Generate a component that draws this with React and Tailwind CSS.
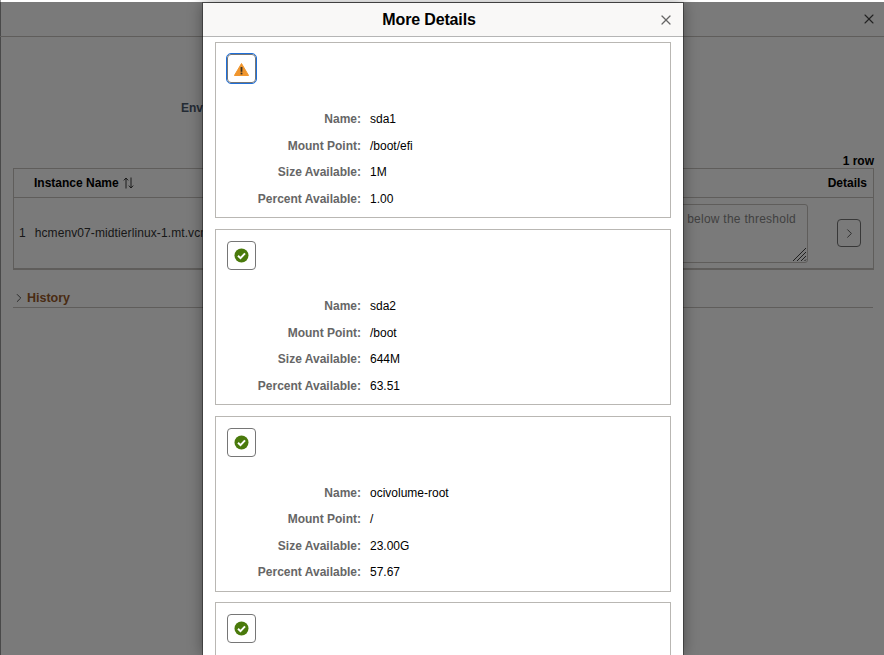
import React from 'react';
import { X, ChevronRight } from 'lucide-react';

const volumes = [
  { id: 1, name: 'sda1', mount: '/boot/efi', size: '1M', percent: '1.00', warn: true },
  { id: 2, name: 'sda2', mount: '/boot', size: '644M', percent: '63.51' },
  { id: 3, name: 'ocivolume-root', mount: '/', size: '23.00G', percent: '57.67' },
  // only the icon of the last card is above the fold
  { id: 4 },
];

function WarnIcon() {
  return (
    <svg width="15" height="13" viewBox="0 0 15 13" className="mt-[2px]">
      <path d="M7.5 0.5 L14.6 12.5 L0.4 12.5 Z" fill="#f0962e" stroke="#f0962e" strokeLinejoin="round" />
      <rect x="6.6" y="4" width="1.8" height="4.8" fill="#3a3226" />
      <rect x="6.6" y="9.6" width="1.8" height="1.8" fill="#3a3226" />
    </svg>
  );
}

function OkIcon() {
  return (
    <svg width="15" height="15" viewBox="0 0 15 15">
      <circle cx="7.5" cy="7.5" r="7" fill="#4a7a0c" />
      <path d="M4 7.8 L6.5 10.2 L11 5.4" fill="none" stroke="#ffffff" strokeWidth="2" />
    </svg>
  );
}

function SortIcon() {
  return (
    <svg width="11" height="12" viewBox="0 0 11 12" className="ml-[4px]" fill="none" stroke="#3a3a3a" strokeWidth="1">
      <path d="M3 11.5 V1 M0.8 3.4 L3 1 L5.2 3.4" />
      <path d="M8 0.5 V11 M5.8 8.6 L8 11 L10.2 8.6" />
    </svg>
  );
}

function ResizeGrip() {
  return (
    <svg width="15" height="15" viewBox="0 0 15 15" className="absolute bottom-0 right-0" stroke="#444444" strokeWidth="1">
      <path d="M1 14 L14 1 M5 14 L14 5 M9 14 L14 9 M12.5 14 L14 12.5" />
    </svg>
  );
}

function Row({ label, value }) {
  return (
    <div className="flex h-[26.5px] items-center text-[12px]">
      <div className="w-[134px] text-right font-bold text-[#666666]">{label}</div>
      <div className="ml-[9px] text-black">{value}</div>
    </div>
  );
}

function VolumeCard({ volume }) {
  return (
    <div className="h-[176px] shrink-0 border border-[#b9b7b3] bg-white pl-[11px] pt-[11px]">
      <button
        className={
          volume.warn
            ? 'flex h-[29px] w-[29px] items-center justify-center rounded-[4px] border border-[#767676] outline-[1.5px] outline-offset-[0.5px] outline-[#1f6fd8]'
            : 'flex h-[29px] w-[29px] items-center justify-center rounded-[4px] border border-[#767676]'
        }
      >
        {volume.warn ? <WarnIcon /> : <OkIcon />}
      </button>
      {volume.name && (
        <div className="mt-[23px]">
          <Row label="Name:" value={volume.name} />
          <Row label="Mount Point:" value={volume.mount} />
          <Row label="Size Available:" value={volume.size} />
          <Row label="Percent Available:" value={volume.percent} />
        </div>
      )}
    </div>
  );
}

function BackgroundPage() {
  return (
    <div className="h-full w-full bg-white pt-[2px] text-[12px] text-[#333333] shadow-[inset_1px_0_0_#999999]">
      <div className="flex h-[35px] items-center justify-end border-b border-[#c6c2be] pr-[7px]">
        <X size={16} strokeWidth={1.6} color="#444444" />
      </div>
      <div className="pl-[181px] pt-[62px] font-bold text-[#4b5a6e]">Environment</div>
      <div className="mt-[36px] h-[15px] pr-[10px] text-right font-bold leading-4 text-black">1 row</div>
      <div className="ml-[13px] mr-[10px] h-[102px] border border-b-2 border-[#c6c2be]">
        <div className="flex h-[29px] items-center justify-between border-b border-[#c6c2be] pl-[20px] pr-[6px] font-bold text-black">
          <span className="flex items-center">
            Instance Name
            <SortIcon />
          </span>
          <span>Details</span>
        </div>
        <div className="flex h-[70px] items-center pl-[5px]">
          <span>1</span>
          <span className="ml-[9px] tracking-[0.1px]">hcmenv07-midtierlinux-1.mt.vcn</span>
          <div className="relative ml-auto mr-[29px] flex h-[59px] w-[200px] justify-end rounded-[3px] border border-[#c6c2be] pr-[11px] pt-[5px] tracking-[0.25px] text-[#888888]">
            below the threshold
            <ResizeGrip />
          </div>
          <div className="mr-[12px] flex h-[28px] w-[24px] items-center justify-center rounded-[4px] border border-[#767676] text-[#555555]">
            <ChevronRight size={15} strokeWidth={1.5} />
          </div>
        </div>
      </div>
      <div className="ml-[13px] mr-[11px] mt-[21px] flex h-[17px] items-center border-b border-[#c6c2be] pb-[2px] text-[12.5px] font-bold text-[#9a5a2a]">
        <ChevronRight size={14} strokeWidth={1.5} color="#444444" className="-ml-[1px]" />
        <span className="ml-[1px]">History</span>
      </div>
    </div>
  );
}

export default function App() {
  return (
    <div className="relative h-[655px] w-[884px] overflow-hidden bg-[#b5b5b5] font-['Liberation_Sans',Arial,sans-serif]">
      <BackgroundPage />
      <div className="absolute inset-x-0 bottom-0 top-[2px] bg-black/[0.52]" />
      <div className="absolute left-[203px] top-[3px] h-[652px] w-[480px] overflow-hidden bg-white shadow-[0_0_0_1px_rgba(0,0,0,0.35),0_0_14px_rgba(0,0,0,0.4)]">
        <div className="relative flex h-[34px] items-center justify-center border-b border-[#b5b5b5] bg-[#f9f8f7] pr-[28px] pt-[1px]">
          <h1 className="text-[16px] font-bold tracking-[-0.15px] text-black">More Details</h1>
          <X size={16} strokeWidth={1.8} color="#666666" className="absolute right-[9px] top-[9px]" />
        </div>
        <div className="flex flex-col gap-[10.8px] px-[12px] pt-[5px]">
          {volumes.map((v) => (
            <VolumeCard key={v.id} volume={v} />
          ))}
        </div>
      </div>
    </div>
  );
}
